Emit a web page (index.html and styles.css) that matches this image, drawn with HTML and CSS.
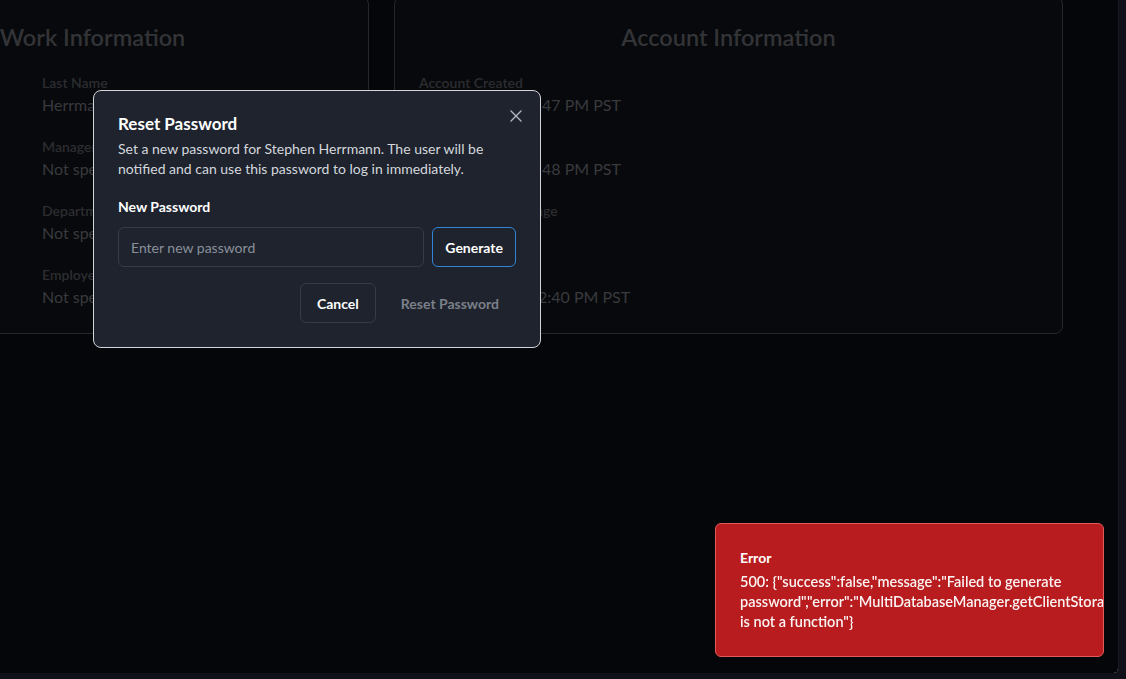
FILE: index.html
```html
<!DOCTYPE html>
<html lang="en">
<head>
<meta charset="utf-8">
<title>User Details - Reset Password</title>
<link rel="stylesheet" href="styles.css">
</head>
<body>
<div class="app">
  <main class="page">
    <div class="cards">
      <section class="card card-work">
        <h2 class="card-title">Work Information</h2>
        <div class="fields fields-two">
          <div class="field"><div class="label">First Name</div><div class="value">Stephen</div></div>
          <div class="field"><div class="label">Last Name</div><div class="value">Herrmann</div></div>
          <div class="field"><div class="label">Job Title</div><div class="value">Not specified</div></div>
          <div class="field"><div class="label">Manager</div><div class="value">Not specified</div></div>
          <div class="field"><div class="label">Location</div><div class="value">Not specified</div></div>
          <div class="field"><div class="label">Department</div><div class="value">Not specified</div></div>
          <div class="field"><div class="label">Start Date</div><div class="value">Not specified</div></div>
          <div class="field"><div class="label">Employee ID</div><div class="value">Not specified</div></div>
        </div>
      </section>
      <section class="card card-account">
        <h2 class="card-title">Account Information</h2>
        <div class="fields">
          <div class="field"><div class="label">Account Created</div><div class="value">1/15/2025, 3:23:47 PM PST</div></div>
          <div class="field"><div class="label">Last Updated</div><div class="value">1/15/2025, 3:23:48 PM PST</div></div>
          <div class="field"><div class="label">Last Password Change</div><div class="value">Never</div></div>
          <div class="field"><div class="label">Last Login</div><div class="value">1/18/2025, 12:12:40 PM PST</div></div>
        </div>
      </section>
    </div>
  </main>
  <span class="resize-corner"></span>
</div>

<div class="dialog" role="dialog" aria-labelledby="dlg-title">
  <button class="dialog-close" aria-label="Close">
    <svg viewBox="0 0 16 16" width="16" height="16"><path d="M3 3l10 10M13 3L3 13" stroke="currentColor" stroke-width="1.4" stroke-linecap="round" fill="none"/></svg>
  </button>
  <h3 class="dialog-title" id="dlg-title">Reset Password</h3>
  <p class="dialog-desc">Set a new password for Stephen Herrmann. The user will be notified and can use this password to log in immediately.</p>
  <label class="dialog-label" for="newpw">New Password</label>
  <div class="pw-row">
    <input class="pw-input" id="newpw" type="password" placeholder="Enter new password">
    <button class="btn btn-outline-blue">Generate</button>
  </div>
  <div class="dialog-footer">
    <button class="btn btn-outline">Cancel</button>
    <button class="btn btn-disabled" disabled>Reset Password</button>
  </div>
</div>

<div class="toast" role="alert">
  <div class="toast-title">Error</div>
  <div class="toast-msg">500: {"success":false,"message":"Failed to generate password","error":"MultiDatabaseManager.getClientStorage is not a function"}</div>
</div>
</body>
</html>
```
FILE: styles.css
```css
* { box-sizing: border-box; }
html, body { margin: 0; padding: 0; }
body {
  width: 1126px;
  height: 679px;
  overflow: hidden;
  background: #111219;
  font-family: "Lato", "Noto Sans", sans-serif;
}
.app {
  position: relative;
  width: 1119px;
  height: 673px;
  background: #050609;
  border-right: 1px solid #191a21;
  border-bottom-right-radius: 4px;
  overflow: hidden;
}
.page { padding: 0; }
.cards {
  display: flex;
  gap: 25px;
  margin-top: -4px;
  margin-left: -184px;
  align-items: flex-start;
}
.card {
  background: #08090c;
  border: 1px solid #26272b;
  border-radius: 8px;
  padding: 24px 24px 24px;
}
.card-work { width: 553px; }
.card-account { width: 669px; }
.card-title {
  margin: 0 0 20px;
  text-align: center;
  font-size: 23.5px;
  line-height: 32px;
  font-weight: 600;
  color: #333437;
}
.fields {
  display: grid;
  grid-template-columns: 1fr;
  row-gap: 20px;
}
.fields-two {
  grid-template-columns: 177px 1fr;
  column-gap: 24px;
}
.field .label {
  font-size: 14px;
  line-height: 20px;
  font-weight: 600;
  color: #2c2d31;
  white-space: nowrap;
}
.field .value {
  font-size: 16px;
  line-height: 24px;
  color: #393a3e;
  white-space: nowrap;
}
.resize-corner {
  position: absolute;
  right: 0;
  bottom: 0;
  width: 4px;
  height: 4px;
  border-right: 1px solid #3a3b42;
  border-bottom: 1px solid #3a3b42;
  border-bottom-right-radius: 2px;
}

/* dialog */
.dialog {
  position: fixed;
  left: 93px;
  top: 90px;
  width: 448px;
  background: #1e232e;
  border: 1px solid #d2d5da;
  border-radius: 8px;
  padding: 24px;
  color: #fff;
}
.dialog-close {
  position: absolute;
  top: 17px;
  right: 16px;
  width: 16px;
  height: 16px;
  padding: 0;
  border: 0;
  background: none;
  color: #b3b8c0;
  display: flex;
}
.dialog-title {
  margin: 0;
  font-size: 17px;
  line-height: 18px;
  font-weight: 700;
  color: #fff;
}
.dialog-desc {
  margin: 6px 0 0;
  font-size: 14px;
  line-height: 20px;
  color: #d4d7dc;
}
.dialog-label {
  display: block;
  margin-top: 18px;
  font-size: 14px;
  line-height: 20px;
  font-weight: 700;
  color: #fff;
}
.pw-row {
  display: flex;
  gap: 8px;
  margin-top: 10px;
}
.pw-input {
  flex: 1;
  min-width: 0;
  height: 40px;
  padding: 0 12px;
  background: transparent;
  border: 1px solid #353b47;
  border-radius: 6px;
  font-family: inherit;
  font-size: 14px;
  color: #fff;
  outline: none;
}
.pw-input::placeholder { color: #8a909a; }
.btn {
  height: 40px;
  padding: 0 16px;
  border-radius: 6px;
  font-family: inherit;
  font-size: 14px;
  font-weight: 700;
  background: transparent;
  color: #fff;
  border: 1px solid transparent;
  white-space: nowrap;
}
.btn-outline-blue {
  padding: 0 12px;
  border-color: #3384d6;
}
.btn-outline { border-color: #353b47; }
.btn-disabled { color: #7b8089; }
.dialog-footer {
  display: flex;
  justify-content: flex-end;
  gap: 8px;
  margin-top: 16px;
}

/* toast */
.toast {
  position: fixed;
  left: 715px;
  top: 523px;
  width: 389px;
  height: 134px;
  background: #b81c1e;
  border: 1px solid #e25a5a;
  border-radius: 6px;
  padding: 24px 32px 24px 24px;
  overflow: hidden;
  color: #fff;
}
.toast-title {
  font-size: 14px;
  line-height: 20px;
  font-weight: 700;
}
.toast-msg {
  margin-top: 4px;
  font-size: 14.5px;
  line-height: 20px;
  font-weight: 600;
  opacity: 0.95;
}
```
